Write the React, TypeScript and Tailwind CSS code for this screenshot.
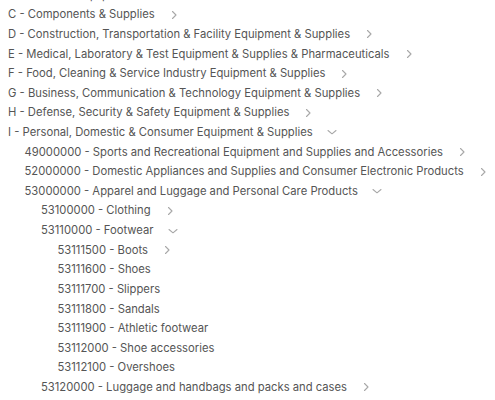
type Row = { level: number; text: string; icon?: "right" | "down" };

const rows: Row[] = [
  { level: 0, text: "B - Industrial Equipment & Tools", icon: "right" },
  { level: 0, text: "C - Components & Supplies", icon: "right" },
  { level: 0, text: "D - Construction, Transportation & Facility Equipment & Supplies", icon: "right" },
  { level: 0, text: "E - Medical, Laboratory & Test Equipment & Supplies & Pharmaceuticals", icon: "right" },
  { level: 0, text: "F - Food, Cleaning & Service Industry Equipment & Supplies", icon: "right" },
  { level: 0, text: "G - Business, Communication & Technology Equipment & Supplies", icon: "right" },
  { level: 0, text: "H - Defense, Security & Safety Equipment & Supplies", icon: "right" },
  { level: 0, text: "I - Personal, Domestic & Consumer Equipment & Supplies", icon: "down" },
  { level: 1, text: "49000000 - Sports and Recreational Equipment and Supplies and Accessories", icon: "right" },
  { level: 1, text: "52000000 - Domestic Appliances and Supplies and Consumer Electronic Products", icon: "right" },
  { level: 1, text: "53000000 - Apparel and Luggage and Personal Care Products", icon: "down" },
  { level: 2, text: "53100000 - Clothing", icon: "right" },
  { level: 2, text: "53110000 - Footwear", icon: "down" },
  { level: 3, text: "53111500 - Boots", icon: "right" },
  { level: 3, text: "53111600 - Shoes" },
  { level: 3, text: "53111700 - Slippers" },
  { level: 3, text: "53111800 - Sandals" },
  { level: 3, text: "53111900 - Athletic footwear" },
  { level: 3, text: "53112000 - Shoe accessories" },
  { level: 3, text: "53112100 - Overshoes" },
  { level: 2, text: "53120000 - Luggage and handbags and packs and cases", icon: "right" },
];

const indent = ["pl-[8px]", "pl-[24.5px]", "pl-[41px]", "pl-[57.5px]"];

function Chevron({ dir }: { dir: "right" | "down" }) {
  return (
    <svg
      className="ml-[14px] shrink-0 text-[#a8a8a8]"
      width="10"
      height="10"
      viewBox="0 0 10 10"
      fill="none"
      stroke="currentColor"
      strokeWidth={1.1}
      strokeLinecap="round"
      strokeLinejoin="round"
    >
      {dir === "right" ? <path d="M3.5 1.5 L7 5 L3.5 8.5" /> : <path d="M1 3.5 L5 6.8 L9 3.5" />}
    </svg>
  );
}

export default function App() {
  return (
    <div className="w-[495px] h-[400px] overflow-hidden bg-white font-['Inter',sans-serif] text-[11.25px] text-[#555555]">
      <div className="-mt-[14.6px] flex flex-col">
        {rows.map((r, i) => (
          <div key={i} className={`flex h-[19.62px] items-center whitespace-nowrap ${indent[r.level]}`}>
            <span>{r.text}</span>
            {r.icon && <Chevron dir={r.icon} />}
          </div>
        ))}
      </div>
    </div>
  );
}
